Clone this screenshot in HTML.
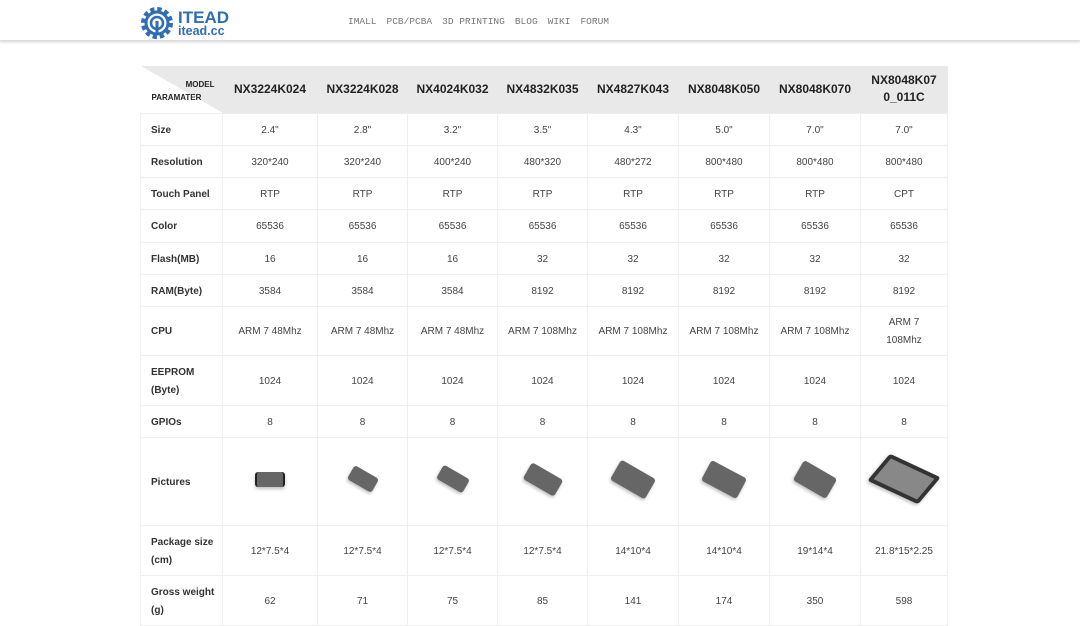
<!DOCTYPE html>
<html><head><meta charset="utf-8"><style>
body{margin:0;width:1080px;height:607px;overflow:hidden;background:#fff;font-family:"Liberation Sans",Arial,sans-serif;color:#333}
.hdr{position:absolute;left:0;top:0;width:1080px;height:40px;background:#fff;box-shadow:0 1px 3px rgba(0,0,0,.18);border-bottom:1px solid #ddd}
.nav{position:absolute;left:348px;top:16px;font-family:"Liberation Mono",monospace;font-size:9.5px;color:#777;word-spacing:0}
.nav span{margin-right:10px}
table{position:absolute;left:140px;top:66px;border-collapse:collapse;table-layout:fixed;width:807px}
td{border:1px solid #eee;text-align:center;font-size:10px;color:#444;padding:3px 4px 0;line-height:18px}
td.l{text-align:left;font-weight:bold;color:#333;padding-left:10px}
tr.h td{background:#e9e9e9;border:none;font-weight:bold;font-size:12px;color:#222;padding-top:0}
.dev{display:inline-block;background:#666;border-radius:3px;box-shadow:0 2px 3px rgba(0,0,0,.25)}
</style></head><body>
<div class="hdr">
<svg style="position:absolute;left:140px;top:6px" width="34" height="34" viewBox="0 0 34 34"><circle cx="17" cy="17" r="13" fill="none" stroke="#2f6db5" stroke-width="6" stroke-dasharray="4 2.8"/><circle cx="17" cy="17" r="11" fill="none" stroke="#2f6db5" stroke-width="3"/><circle cx="17" cy="17" r="6" fill="none" stroke="#2f6db5" stroke-width="2.5"/><rect x="15.5" y="15" width="3" height="14" fill="#2f6db5"/></svg>
<div style="position:absolute;left:178px;top:9px;font-weight:bold;font-size:17px;color:#2f6db5;line-height:17px">ITEAD</div>
<div style="position:absolute;left:178px;top:25px;font-weight:bold;font-size:12.5px;color:#2f6db5;line-height:13px">itead.cc</div>
<div class="nav"><span>IMALL</span><span>PCB/PCBA</span><span>3D PRINTING</span><span>BLOG</span><span>WIKI</span><span>FORUM</span></div>
</div>
<table>
<colgroup><col style="width:82px"><col style="width:95px"><col style="width:90px"><col style="width:90px"><col style="width:90px"><col style="width:91px"><col style="width:91px"><col style="width:91px"><col style="width:87px"></colgroup>
<tr class="h" style="height:47px"><td style="position:relative;padding:0;background:linear-gradient(to top right,#fff 50%,#e9e9e9 50%)"><span style="position:absolute;right:8px;top:10px;font-size:8px">MODEL</span><span style="position:absolute;left:11px;bottom:6px;font-size:8px">PARAMATER</span></td><td>NX3224K024</td><td>NX3224K028</td><td>NX4024K032</td><td>NX4832K035</td><td>NX4827K043</td><td>NX8048K050</td><td>NX8048K070</td><td style="line-height:17px">NX8048K07<br>0_011C</td></tr>
<tr style="height:32px"><td class="l">Size</td><td>2.4"</td><td>2.8"</td><td>3.2"</td><td>3.5"</td><td>4.3"</td><td>5.0"</td><td>7.0"</td><td>7.0"</td></tr>
<tr style="height:32px"><td class="l">Resolution</td><td>320*240</td><td>320*240</td><td>400*240</td><td>480*320</td><td>480*272</td><td>800*480</td><td>800*480</td><td>800*480</td></tr>
<tr style="height:32px"><td class="l">Touch Panel</td><td>RTP</td><td>RTP</td><td>RTP</td><td>RTP</td><td>RTP</td><td>RTP</td><td>RTP</td><td>CPT</td></tr>
<tr style="height:33px"><td class="l">Color</td><td>65536</td><td>65536</td><td>65536</td><td>65536</td><td>65536</td><td>65536</td><td>65536</td><td>65536</td></tr>
<tr style="height:32px"><td class="l">Flash(MB)</td><td>16</td><td>16</td><td>16</td><td>32</td><td>32</td><td>32</td><td>32</td><td>32</td></tr>
<tr style="height:32px"><td class="l">RAM(Byte)</td><td>3584</td><td>3584</td><td>3584</td><td>8192</td><td>8192</td><td>8192</td><td>8192</td><td>8192</td></tr>
<tr style="height:49px"><td class="l">CPU</td><td>ARM 7 48Mhz</td><td>ARM 7 48Mhz</td><td>ARM 7 48Mhz</td><td>ARM 7 108Mhz</td><td>ARM 7 108Mhz</td><td>ARM 7 108Mhz</td><td>ARM 7 108Mhz</td><td>ARM 7<br>108Mhz</td></tr>
<tr style="height:50px"><td class="l">EEPROM<br>(Byte)</td><td>1024</td><td>1024</td><td>1024</td><td>1024</td><td>1024</td><td>1024</td><td>1024</td><td>1024</td></tr>
<tr style="height:32px"><td class="l">GPIOs</td><td>8</td><td>8</td><td>8</td><td>8</td><td>8</td><td>8</td><td>8</td><td>8</td></tr>
<tr style="height:88px"><td class="l">Pictures</td>
<td><span class="dev" style="width:26px;height:15px;border-left:2px solid #222;border-right:2px solid #222"></span></td>
<td><span class="dev" style="width:28px;height:16px;transform:rotate(30deg)"></span></td>
<td><span class="dev" style="width:30px;height:16px;transform:rotate(30deg)"></span></td>
<td><span class="dev" style="width:36px;height:19px;transform:rotate(30deg)"></span></td>
<td><span class="dev" style="width:40px;height:23px;transform:rotate(30deg)"></span></td>
<td><span class="dev" style="width:40px;height:23px;transform:rotate(28deg)"></span></td>
<td><span class="dev" style="width:38px;height:23px;transform:rotate(30deg)"></span></td>
<td><span class="dev" style="width:48px;height:26px;transform:rotate(25deg) skewX(-15deg);border:4px solid #333;background:#888"></span></td></tr>
<tr style="height:50px"><td class="l">Package size<br>(cm)</td><td>12*7.5*4</td><td>12*7.5*4</td><td>12*7.5*4</td><td>12*7.5*4</td><td>14*10*4</td><td>14*10*4</td><td>19*14*4</td><td>21.8*15*2.25</td></tr>
<tr style="height:50px"><td class="l">Gross weight<br>(g)</td><td>62</td><td>71</td><td>75</td><td>85</td><td>141</td><td>174</td><td>350</td><td>598</td></tr>
</table>
</body></html>
